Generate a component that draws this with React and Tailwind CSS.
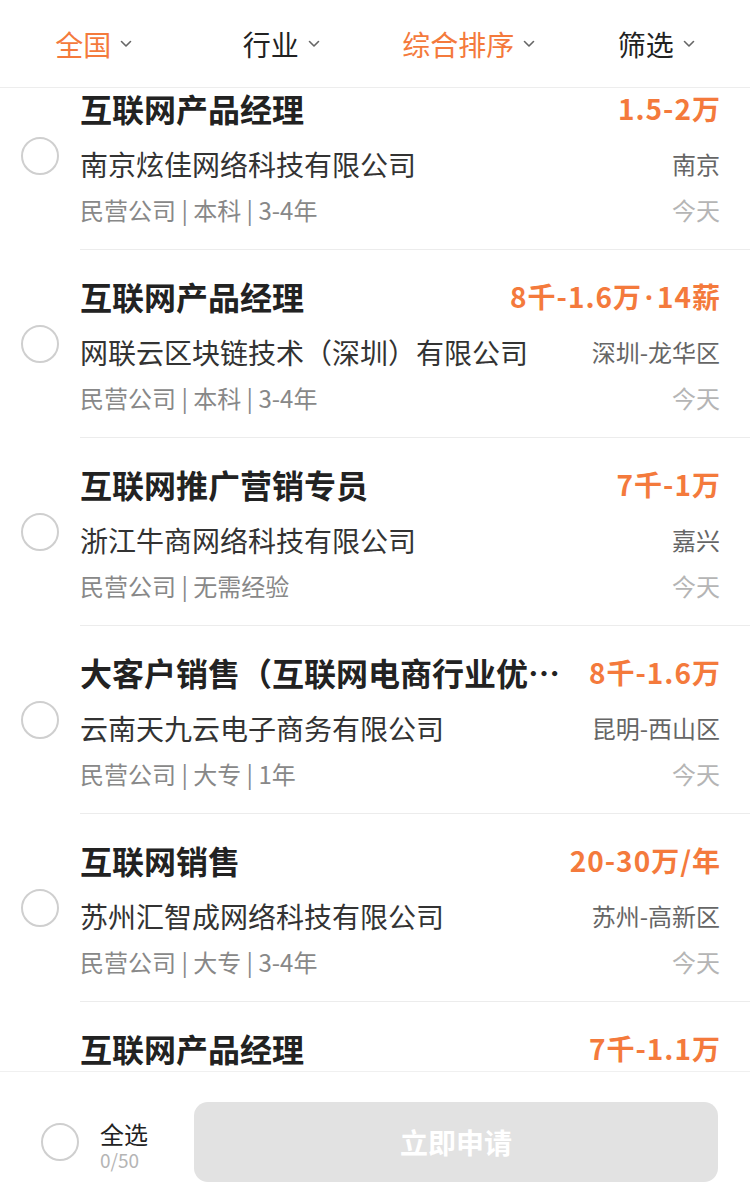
import React from "react";

const tabs = [
  { label: "全国", active: true },
  { label: "行业", active: false },
  { label: "综合排序", active: true },
  { label: "筛选", active: false },
];

const jobs = [
  { title: "互联网产品经理", salary: "1.5-2万", company: "南京炫佳网络科技有限公司", city: "南京", meta: "民营公司 | 本科 | 3-4年" },
  { title: "互联网产品经理", salary: "8千-1.6万", extra: "14薪", company: "网联云区块链技术（深圳）有限公司", city: "深圳-龙华区", meta: "民营公司 | 本科 | 3-4年" },
  { title: "互联网推广营销专员", salary: "7千-1万", company: "浙江牛商网络科技有限公司", city: "嘉兴", meta: "民营公司 | 无需经验" },
  { title: "大客户销售（互联网电商行业优秀人才）", salary: "8千-1.6万", company: "云南天九云电子商务有限公司", city: "昆明-西山区", meta: "民营公司 | 大专 | 1年" },
  { title: "互联网销售", salary: "20-30万/年", company: "苏州汇智成网络科技有限公司", city: "苏州-高新区", meta: "民营公司 | 大专 | 3-4年" },
  { title: "互联网产品经理", salary: "7千-1.1万", company: "杭州某网络科技有限公司", city: "杭州", meta: "民营公司 | 本科 | 3-4年" },
];

function Chevron() {
  return (
    <svg width="12" height="8" viewBox="0 0 12 8" className="ml-[9px]" fill="none">
      <path d="M1.5 1.5 L6 6 L10.5 1.5" stroke="#666" strokeWidth="1.6" strokeLinecap="round" strokeLinejoin="round" />
    </svg>
  );
}

function Radio() {
  return <div className="w-[38px] h-[38px] rounded-full border-2 border-[#cfcfcf] bg-white shrink-0" />;
}

function JobItem({ job }) {
  return (
    <div className="flex h-[188px]">
      <div className="w-[80px] shrink-0 flex items-center justify-center">
        <Radio />
      </div>
      <div className="flex-1 min-w-0 border-b border-[#ececec] pr-[30px] pt-[26px]">
        <div className="flex items-center h-[40px]">
          <div className="flex-1 min-w-0 truncate text-[32px] font-bold text-[#222] leading-[40px]">
            {job.title}
          </div>
          <div className="shrink-0 ml-[16px] text-[28px] font-bold text-[#f47a3c] leading-[40px] tracking-[1px] -mr-[1px]">
            {job.salary}
            {job.extra && (
              <>
                <span className="mx-[3px]" style={{ fontFamily: '"Noto Sans", sans-serif' }}>·</span>
                {job.extra}
              </>
            )}
          </div>
        </div>
        <div className="flex items-center mt-[18px] h-[36px]">
          <div className="flex-1 min-w-0 truncate text-[28px] text-[#333] leading-[36px]">{job.company}</div>
          <div className="shrink-0 ml-[16px] text-[24px] text-[#666] leading-[36px]">{job.city}</div>
        </div>
        <div className="flex items-center mt-[12px] h-[32px]">
          <div className="flex-1 min-w-0 truncate text-[24px] text-[#888] leading-[32px]">{job.meta}</div>
          <div className="shrink-0 text-[24px] text-[#b5b5b5] leading-[32px]">今天</div>
        </div>
      </div>
    </div>
  );
}

export default function App() {
  return (
    <div
      className="w-[750px] h-[1190px] bg-white flex flex-col overflow-hidden"
      style={{ fontFamily: '"Noto Sans CJK SC", "Noto Sans", sans-serif' }}
    >
      {/* Filter bar */}
      <div className="h-[88px] shrink-0 grid grid-cols-4 border-b border-[#ededed] relative z-10 bg-white">
        {tabs.map((t) => (
          <div key={t.label} className="flex items-center justify-center">
            <span className={`text-[28px] leading-[36px] ${t.active ? "text-[#f47a3c]" : "text-[#222]"}`}>
              {t.label}
            </span>
            <Chevron />
          </div>
        ))}
      </div>

      {/* Job list */}
      <div className="flex-1 overflow-hidden">
        <div className="-mt-[26px]">
          {jobs.map((job, i) => (
            <JobItem key={i} job={job} />
          ))}
        </div>
      </div>

      {/* Bottom bar */}
      <div className="h-[119px] shrink-0 border-t border-[#f0f0f0] flex items-center pt-[21px] pl-[41px] pr-[32px] bg-white">
        <Radio />
        <div className="ml-[21px] mt-[6px] flex flex-col">
          <span className="text-[24px] leading-[30px] text-[#222]">全选</span>
          <span className="text-[19px] leading-[22px] text-[#b5b5b5]">0/50</span>
        </div>
        <button className="ml-[46px] flex-1 h-[80px] rounded-[14px] bg-[#e2e2e2] text-white text-[28px] font-bold">
          立即申请
        </button>
      </div>
    </div>
  );
}
